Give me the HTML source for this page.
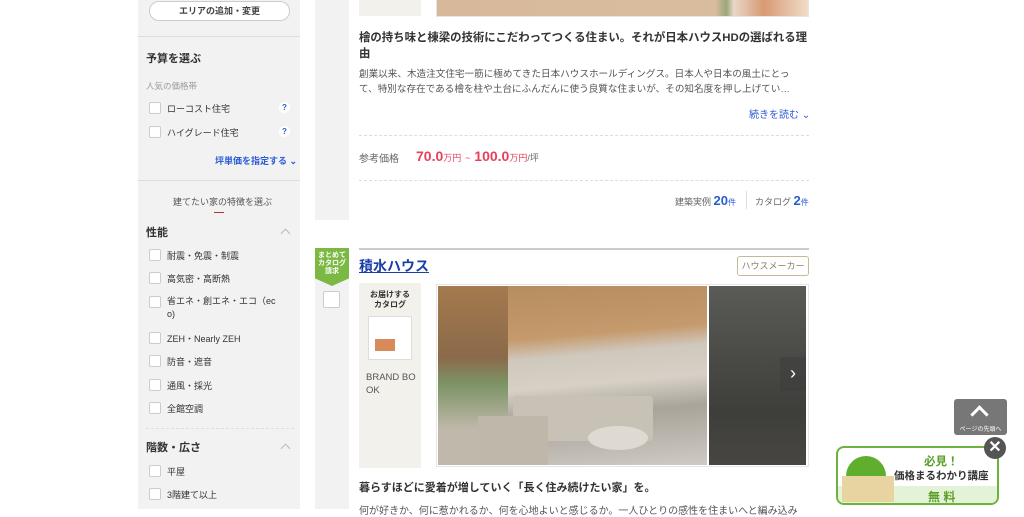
<!DOCTYPE html>
<html><head><meta charset="utf-8"><style>
*{margin:0;padding:0;box-sizing:border-box}
body{width:1024px;height:509px;overflow:hidden;background:#fff;position:relative;font-family:"Liberation Sans","Noto Sans CJK JP",sans-serif;color:#333}
.a{position:absolute;white-space:nowrap}
.side{position:absolute;left:138px;top:0;width:162px;height:509px;background:#f2f2f2}
.cb{position:absolute;width:12px;height:12px;background:#fff;border:1px solid #ccc;border-radius:2px}
.lbl{position:absolute;font-size:9px;color:#333}
.h{position:absolute;font-size:11px;font-weight:bold;color:#333}
.q{position:absolute;width:11px;height:11px;border-radius:50%;background:#fff;color:#2a5bd7;font-size:8px;font-weight:bold;text-align:center;line-height:11px}
.chev{position:absolute;width:7px;height:7px;border-left:1.5px solid #bbb;border-top:1.5px solid #bbb;transform:rotate(45deg)}
.dash{position:absolute;border-top:1px dashed #ddd}
.blue{color:#2a5bd7}
</style></head><body>
<div class="side"></div>
<div class="a" style="left:149px;top:1px;width:141px;height:20px;border:1px solid #ccc;border-radius:10px;background:#fff;font-size:9px;font-weight:bold;text-align:center;line-height:18px;color:#444">エリアの追加・変更</div>
<div style="position:absolute;left:138px;top:36px;width:162px;border-top:1px solid #ddd"></div>
<div class="h" style="left:146px;top:50px">予算を選ぶ</div>
<div class="lbl" style="left:146px;top:80px;color:#999;font-size:8.5px">人気の価格帯</div>
<div class="cb" style="left:149px;top:102px"></div><div class="lbl" style="left:167px;top:102px">ローコスト住宅</div><div class="q" style="left:279px;top:102px">?</div>
<div class="cb" style="left:149px;top:126px"></div><div class="lbl" style="left:167px;top:126px">ハイグレード住宅</div><div class="q" style="left:279px;top:126px">?</div>
<div class="lbl blue" style="left:215px;top:154px;font-size:9px;font-weight:bold">坪単価を指定する ⌄</div>
<div style="position:absolute;left:138px;top:180px;width:162px;border-top:1px solid #ddd"></div>
<div class="lbl" style="left:173px;top:195px;color:#555;font-size:9px">建てたい家の特徴を選ぶ</div>
<div style="position:absolute;left:214px;top:212px;width:10px;height:1px;background:#a33"></div>
<div class="h" style="left:146px;top:224px">性能</div><div class="chev" style="left:282px;top:230px"></div>
<div class="cb" style="left:149px;top:249px"></div><div class="lbl" style="left:167px;top:249px">耐震・免震・制震</div>
<div class="cb" style="left:149px;top:272px"></div><div class="lbl" style="left:167px;top:272px">高気密・高断熱</div>
<div class="cb" style="left:149px;top:296px"></div><div class="lbl" style="left:167px;top:295px;line-height:13px">省エネ・創エネ・エコ（ec<br>o)</div>
<div class="cb" style="left:149px;top:332px"></div><div class="lbl" style="left:167px;top:332px">ZEH・Nearly ZEH</div>
<div class="cb" style="left:149px;top:355px"></div><div class="lbl" style="left:167px;top:355px">防音・遮音</div>
<div class="cb" style="left:149px;top:379px"></div><div class="lbl" style="left:167px;top:379px">通風・採光</div>
<div class="cb" style="left:149px;top:402px"></div><div class="lbl" style="left:167px;top:402px">全館空調</div>
<div class="dash" style="left:146px;top:428px;width:148px"></div>
<div class="h" style="left:146px;top:439px">階数・広さ</div><div class="chev" style="left:282px;top:445px"></div>
<div class="cb" style="left:149px;top:465px"></div><div class="lbl" style="left:167px;top:465px">平屋</div>
<div class="cb" style="left:149px;top:488px"></div><div class="lbl" style="left:167px;top:488px">3階建て以上</div>

<div style="position:absolute;left:315px;top:0;width:34px;height:220px;background:#f2f2f2"></div>
<div style="position:absolute;left:315px;top:248px;width:34px;height:261px;background:#f2f2f2"></div>
<div style="position:absolute;left:359px;top:0;width:62px;height:16px;background:#f3f1ec"></div>
<div style="position:absolute;left:436px;top:0;width:373px;height:17px;border:1px solid #e5e5e5;border-top:none;background:linear-gradient(90deg,#d8b89a 0%,#d9bc9e 75%,#9aa77a 78%,#e8d8c8 80%,#d79a73 88%,#f0dcc8 100%)"></div>
<div class="a" style="left:359px;top:30px;font-size:11.4px;font-weight:bold;line-height:16px;white-space:normal;width:452px">檜の持ち味と棟梁の技術にこだわってつくる住まい。それが日本ハウスHDの選ばれる理由</div>
<div class="a" style="left:359px;top:67px;font-size:9.6px;line-height:15px;white-space:normal;width:448px;color:#555">創業以来、木造注文住宅一筋に極めてきた日本ハウスホールディングス。日本人や日本の風土にとっ<br>て、特別な存在である檜を柱や土台にふんだんに使う良質な住まいが、その知名度を押し上げてい…</div>
<div class="a blue" style="left:749px;top:106px;font-size:10px">続きを読む ⌄</div>
<div class="dash" style="left:359px;top:135px;width:450px"></div>
<div class="a" style="left:359px;top:150px;font-size:10px;color:#666">参考価格</div>
<div class="a" style="left:416px;top:148px;font-size:14px;font-weight:bold;color:#e8405a">70.0<span style="font-size:9px;font-weight:normal">万円</span> <span style="font-size:9px;font-weight:normal">~</span> 100.0<span style="font-size:9px;font-weight:normal">万円</span><span style="font-size:9px;font-weight:normal;color:#666">/坪</span></div>
<div class="dash" style="left:359px;top:180px;width:450px"></div>
<div class="a" style="left:675px;top:193px;font-size:9px;color:#666">建築実例 <b class="blue" style="font-size:13px">20</b><span class="blue" style="font-size:8px">件</span></div>
<div style="position:absolute;left:746px;top:191px;height:18px;border-left:1px solid #ddd"></div>
<div class="a" style="left:755px;top:193px;font-size:9px;color:#666">カタログ <b class="blue" style="font-size:13px">2</b><span class="blue" style="font-size:8px">件</span></div>

<div style="position:absolute;left:359px;top:248px;width:450px;border-top:2px solid #ccc"></div>
<div class="a" style="left:315px;top:248px;width:34px;height:38px;background:#7cb944;clip-path:polygon(0 0,100% 0,100% 80%,50% 100%,0 80%);color:#fff;font-size:7px;font-weight:bold;text-align:center;line-height:8px;padding-top:4px">まとめて<br>カタログ<br>請求</div>
<div class="cb" style="left:323px;top:291px;width:17px;height:17px"></div>
<div class="a" style="left:359px;top:256px;font-size:14px;font-weight:bold;color:#1a3fa8;text-decoration:underline">積水ハウス</div>
<div class="a" style="left:737px;top:256px;width:72px;height:20px;border:1px solid #c8b89a;border-radius:3px;font-size:9px;color:#8a7a60;text-align:center;line-height:18px">ハウスメーカー</div>
<div style="position:absolute;left:359px;top:283px;width:62px;height:185px;background:#f3f1ec"></div>
<div class="a" style="left:359px;top:290px;width:62px;font-size:8px;font-weight:bold;text-align:center;line-height:10px">お届けする<br>カタログ</div>
<div style="position:absolute;left:368px;top:316px;width:44px;height:44px;background:#fff;border:1px solid #ddd"><div style="position:absolute;left:6px;top:22px;width:20px;height:12px;background:#d98a5a"></div></div>
<div class="a" style="left:366px;top:371px;font-size:9.5px;line-height:13px;color:#555">BRAND BO<br>OK</div>
<div style="position:absolute;left:436px;top:284px;width:373px;height:183px;border:1px solid #e5e5e5"></div>
<div style="position:absolute;left:438px;top:286px;width:269px;height:179px;overflow:hidden;background:linear-gradient(175deg,#b48c5e 0%,#c59a6c 30%,#cfc8bc 40%,#d6d0c6 55%,#a9a49a 70%,#cfcac2 100%)">
<div style="position:absolute;left:0;top:0;width:70px;height:179px;background:linear-gradient(180deg,#a57a4e,#8a6a4a 40%,#7c9466 55%,#c0b8aa 80%)"></div>
<div style="position:absolute;left:75px;top:110px;width:140px;height:45px;background:#c8c2b6;border-radius:4px"></div>
<div style="position:absolute;left:40px;top:130px;width:70px;height:49px;background:#bfb7aa"></div>
<div style="position:absolute;left:150px;top:140px;width:60px;height:24px;background:#dedad2;border-radius:50%"></div>
</div>
<div style="position:absolute;left:709px;top:286px;width:97px;height:179px;background:linear-gradient(180deg,#5a5a56,#4a4a46 40%,#3e3e3a 70%,#474643)"></div>
<div class="a" style="left:780px;top:357px;width:26px;height:34px;background:rgba(60,60,60,.5);color:#fff;font-size:18px;text-align:center;line-height:32px">›</div>
<div class="a" style="left:359px;top:479px;font-size:11px;font-weight:bold">暮らすほどに愛着が増していく「長く住み続けたい家」を。</div>
<div class="a" style="left:359px;top:502px;font-size:10px;color:#555">何が好きか、何に惹かれるか、何を心地よいと感じるか。一人ひとりの感性を住まいへと編み込み</div>

<div class="a" style="left:954px;top:399px;width:53px;height:36px;background:#777;border-radius:3px;color:#fff;text-align:center">
<div style="position:absolute;left:19px;top:9px;width:13px;height:13px;border-left:3px solid #fff;border-top:3px solid #fff;transform:rotate(45deg)"></div>
<div style="position:absolute;left:0;top:25px;width:53px;font-size:6px">ページの先頭へ</div></div>
<div style="position:absolute;left:836px;top:446px;width:163px;height:59px;border:2px solid #6cb33e;border-radius:8px;background:#fff;overflow:hidden">
<div style="position:absolute;left:0;top:38px;width:163px;height:21px;background:#e4f2d8"></div>
<div style="position:absolute;left:8px;top:8px;width:40px;height:40px;border-radius:50% 50% 0 0;background:#5fae2e"></div>
<div style="position:absolute;left:4px;top:28px;width:52px;height:26px;background:#e8d4a0"></div>
<div class="a" style="left:86px;top:5px;font-size:11.5px;font-weight:bold;color:#5a9e2a">必見！</div>
<div class="a" style="left:56px;top:20px;font-size:10.5px;font-weight:bold;color:#333">価格まるわかり講座</div>
<div class="a" style="left:90px;top:40px;font-size:12px;font-weight:bold;color:#5a9e2a">無 料</div>
</div>
<div class="a" style="left:984px;top:437px;width:22px;height:22px;border-radius:50%;background:#555;color:#fff;font-size:16px;font-weight:bold;text-align:center;line-height:22px">✕</div>
</body></html>
